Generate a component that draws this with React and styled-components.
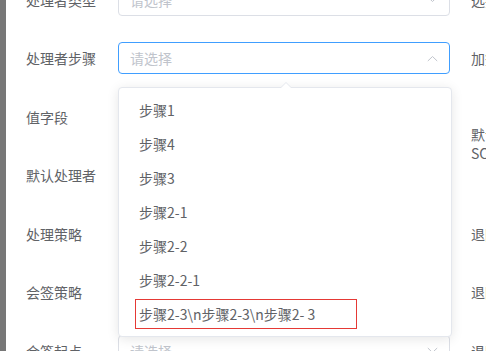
import React from "react";
import styled, { createGlobalStyle } from "styled-components";

const GlobalStyle = createGlobalStyle`
  html, body { margin: 0; padding: 0; overflow: hidden; background: #fff; }
  body { font-family: "Noto Sans CJK SC", "Noto Sans", sans-serif; }
`;

const Page = styled.div`
  display: flex;
  width: 486px;
  height: 351px;
  overflow: hidden;
`;

const Strip = styled.div`
  width: 6px;
  flex-shrink: 0;
  background: #777777;
`;

const Panel = styled.div`
  position: relative;
  flex: 1;
  padding-left: 20px;
  overflow: hidden;
`;

const Form = styled.div`
  display: grid;
  grid-template-columns: 92px 332px 1fr;
  grid-auto-rows: 32px;
  row-gap: 26.5px;
  margin-top: -16.5px;
`;

const Label = styled.div`
  font-size: 14px;
  line-height: 32px;
  color: #606266;
  white-space: nowrap;
`;

const SideLabel = styled.div`
  padding-left: 21px;
  padding-top: ${(p) => p.$offset || 0}px;
  font-size: 14px;
  line-height: ${(p) => (p.$multi ? "19px" : "32px")};
  color: #606266;
  white-space: nowrap;
  overflow: visible;
`;

const Select = styled.div`
  box-sizing: border-box;
  height: 32px;
  display: flex;
  align-items: center;
  justify-content: space-between;
  padding: 0 11px 0 11px;
  border: 1px solid ${(p) => (p.$focused ? "#409eff" : "#dcdfe6")};
  border-radius: 4px;
  background: #fff;
  font-size: 14px;
  color: #c0c4cc;
`;

const Dropdown = styled.div`
  position: absolute;
  left: 112px;
  top: 87px;
  width: 334px;
  box-sizing: border-box;
  padding: 5px 0;
  background: #fff;
  border: 1px solid #e4e7ed;
  border-radius: 4px;
  box-shadow: 0 2px 12px 0 rgba(0, 0, 0, 0.1);
  z-index: 2;

  &::before,
  &::after {
    content: "";
    position: absolute;
    left: 161px;
    border: 6px solid transparent;
    border-top-width: 0;
  }
  &::before {
    top: -6px;
    border-bottom-color: #e4e7ed;
  }
  &::after {
    top: -5px;
    border-bottom-color: #fff;
  }
`;

const Option = styled.div`
  height: 34px;
  display: flex;
  align-items: center;
  padding: 0 20px 0 ${(p) => (p.$boxed ? 16 : 20)}px;
  font-size: 14px;
  color: #606266;
  white-space: nowrap;
`;

const Marked = styled.span`
  box-sizing: border-box;
  width: 222px;
  height: 30px;
  display: flex;
  align-items: center;
  padding-left: 3px;
  border: 1px solid #e53935;
`;

const Chevron = ({ up }) => (
  <svg width="11" height="7" viewBox="0 0 11 7" style={{ flexShrink: 0 }}>
    <polyline
      points={up ? "0.8,6 5.5,1.5 10.2,6" : "0.8,1 5.5,5.5 10.2,1"}
      fill="none"
      stroke="#c0c4cc"
      strokeWidth="1"
    />
  </svg>
);

const SelectBox = ({ focused, up }) => (
  <Select $focused={focused}>
    <span>请选择</span>
    <Chevron up={up} />
  </Select>
);

const options = [
  "步骤1",
  "步骤4",
  "步骤3",
  "步骤2-1",
  "步骤2-2",
  "步骤2-2-1",
];

export default function App() {
  return (
    <>
      <GlobalStyle />
      <Page>
        <Strip />
        <Panel>
          <Form>
            <Label>处理者类型</Label>
            <SelectBox />
            <SideLabel>选择方式</SideLabel>

            <Label>处理者步骤</Label>
            <SelectBox focused up />
            <SideLabel>加签方式</SideLabel>

            <Label>值字段</Label>
            <SelectBox />
            <SideLabel $multi $offset={24}>
              默认
              <br />
              SCOPE
            </SideLabel>

            <Label>默认处理者</Label>
            <SelectBox />
            <SideLabel />

            <Label>处理策略</Label>
            <SelectBox />
            <SideLabel>退回策略</SideLabel>

            <Label>会签策略</Label>
            <SelectBox />
            <SideLabel>退回节点</SideLabel>

            <Label>会签起点</Label>
            <SelectBox />
            <SideLabel>退回方式</SideLabel>
          </Form>

          <Dropdown>
            {options.map((o) => (
              <Option key={o}>{o}</Option>
            ))}
            <Option $boxed>
              <Marked>{"步骤2-3\\n步骤2-3\\n步骤2- 3"}</Marked>
            </Option>
          </Dropdown>
        </Panel>
      </Page>
    </>
  );
}
